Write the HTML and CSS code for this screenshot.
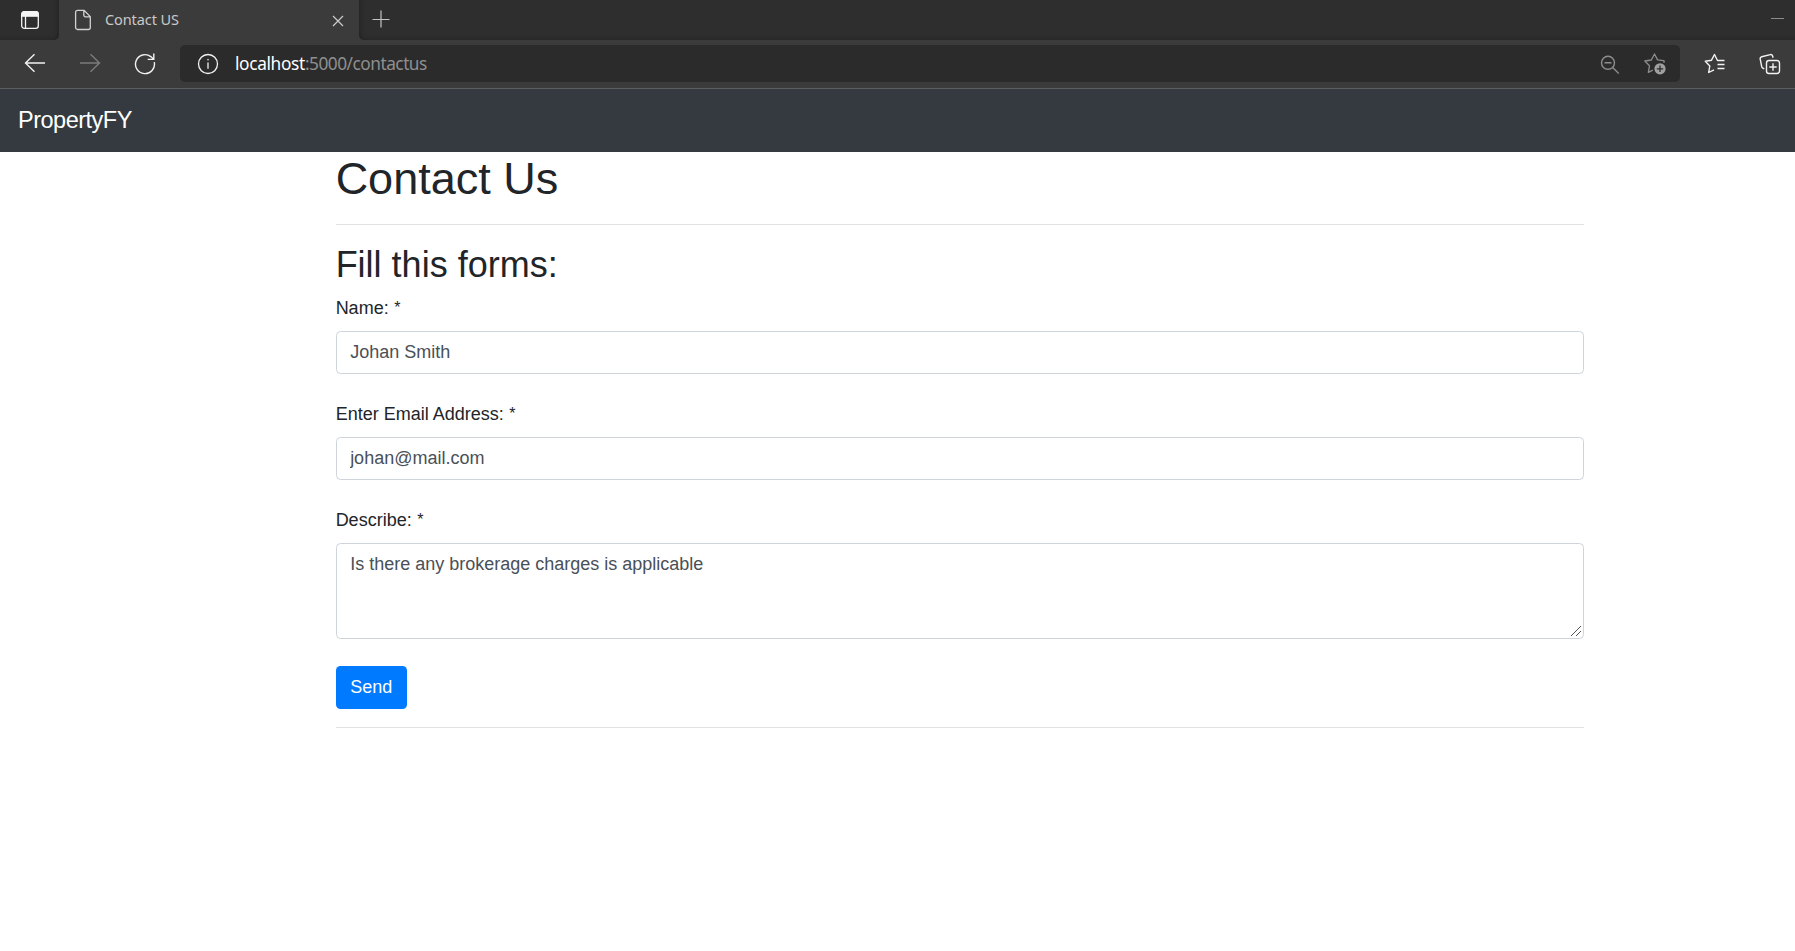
FILE: index.html
```html
<!DOCTYPE html>
<html lang="en">
<head>
<meta charset="utf-8">
<title>Contact US</title>
<link rel="stylesheet" href="styles.css">
</head>
<body>
<header class="browser">
  <div class="tabstrip">
    <div class="tabmenu">
      <svg width="20" height="20" viewBox="0 0 20 20" fill="none" stroke="#f4f4f4" stroke-width="1.3"><rect x="1.7" y="1.7" width="16.6" height="16.6" rx="2.6"/><path d="M5.5 6v12"/><path d="M2 6.2V4a2.4 2.4 0 0 1 2.4-2.4h11.2A2.4 2.4 0 0 1 18 4v2.200z" fill="#f4f4f4"/></svg>
    </div>
    <div class="tab">
      <svg class="doc" width="18" height="22" viewBox="0 0 18 22" fill="none" stroke="#d2d2d2" stroke-width="1.3" stroke-linejoin="round"><path d="M3.600 1.300H10L16.300 7.600V18.500a2 2 0 0 1-2 2H3.600a2 2 0 0 1-2-2V3.300a2 2 0 0 1 2-2zM9.800 1.500V6.200a1.600 1.600 0 0 0 1.600 1.600H16"/></svg>
      <span class="tab-title">Contact US</span>
      <svg class="close" width="12" height="12" viewBox="0 0 12 12" stroke="#cdcdcd" stroke-width="1.200"><path d="M1 1l10 10M11 1L1 11"/></svg>
    </div>
    <div class="strip-rest">
      <svg class="plus" width="18" height="18" viewBox="0 0 18 18" stroke="#c4c4c4" stroke-width="1.200"><path d="M.5 9.500h17M9 .5v17"/></svg>
      <svg class="minimize" width="14" height="2" viewBox="0 0 14 2"><path d="M0 .5h13" stroke="#8c8c8c"/></svg>
    </div>
  </div>
  <div class="toolbar">
    <svg class="back" width="22" height="20" viewBox="0 0 22 20" fill="none" stroke="#f2f2f2" stroke-width="1.4"><path d="M21 10H1.500M10.500 1.200L1.500 10l9 8.800"/></svg>
    <svg class="forward" width="22" height="20" viewBox="0 0 22 20" fill="none" stroke="#7b7b7b" stroke-width="1.4"><path d="M1 10h19.500M11.500 1.200l9 8.800-9 8.800"/></svg>
    <svg class="reload" width="22" height="22" viewBox="0 0 22 22" fill="none" stroke="#f2f2f2" stroke-width="1.400"><path d="M20.300 9.200A9.500 9.500 0 1 1 16.800 3.600L19.500 6M13.700 6.400h6.100V.6"/></svg>
    <div class="address">
      <svg class="info" width="22" height="22" viewBox="0 0 22 22" fill="none" stroke="#f2f2f2" stroke-width="1.300"><circle cx="11" cy="11" r="9.500"/><path d="M11 9.500v6.300"/><circle cx="11" cy="6.700" r=".5" fill="#f2f2f2" stroke-width=".6"/></svg>
      <span class="url"><span class="host">localhost</span>:5000/contactus</span>
      <svg class="zoom" width="20" height="20" viewBox="0 0 20 20" fill="none" stroke="#8d8d8d" stroke-width="1.400"><circle cx="8" cy="7.800" r="6.500"/><path d="M4.500 7.800h7M12.700 12.500l6 6"/></svg>
      <svg class="addfav" width="24" height="24" viewBox="0 0 24 24" fill="none" stroke="#8d8d8d" stroke-width="1.300" stroke-linejoin="round"><path d="M20.500 10.500l.7-.8q.3-.8-.7-1l-5.900-.8L11.500 2 8.300 8 1.800 9l4.700 4.800-1.200 6.500 4.500-2.200"/><circle cx="17" cy="16.800" r="5.600" fill="#a0a0a0" stroke="none"/><path d="M17 13.600V20M13.800 16.800h6.400" stroke="#2b2b2b"/></svg>
    </div>
    <svg class="favs" width="22" height="22" viewBox="0 0 22 22" fill="none" stroke="#f2f2f2" stroke-width="1.400" stroke-linejoin="round"><path d="M20.500 7.500h-7L10.500 1.500 7.500 7.200 1.300 8.200l4.500 4.700L4.700 19.500l5.300-2.700M13.500 11.500h7M13.500 15.500h7"/></svg>
    <svg class="collections" width="22" height="22" viewBox="0 0 22 22" fill="none" stroke="#f2f2f2" stroke-width="1.400" stroke-linejoin="round"><rect x="7.500" y="7.500" width="13" height="13" rx="2.500"/><path d="M14 10.300v7.400M10.300 14h7.400M5.300 16L3.900 15.200Q3 14.600 2.700 13.500L1.200 6.200q-.4-2 1.500-2.500L11.300 1.600q1.800-.3 2.300 1.400l.5 1.700"/></svg>
  </div>
</header>
<nav class="navbar"><a class="brand">PropertyFY</a></nav>
<main class="container">
  <h1>Contact Us</h1>
  <hr>
  <h2>Fill this forms:</h2>
  <form>
    <div class="group">
      <label for="name">Name: <span class="req">*</span></label>
      <input id="name" class="control" type="text" value="Johan Smith">
    </div>
    <div class="group">
      <label for="email">Enter Email Address: <span class="req">*</span></label>
      <input id="email" class="control" type="text" value="johan@mail.com">
    </div>
    <div class="group">
      <label for="describe">Describe: <span class="req">*</span></label>
      <div class="area-wrap">
        <textarea id="describe" class="control area" rows="3" spellcheck="false">Is there any brokerage charges is applicable</textarea>
        <svg class="grip" width="12" height="12" viewBox="0 0 12 12" stroke="#555" stroke-width="1"><path d="M1 11L11 1M6 11l5-5"/></svg>
      </div>
    </div>
    <button class="send" type="button">Send</button>
  </form>
  <hr>
</main>
</body>
</html>
```
FILE: styles.css
```css
* { box-sizing: border-box; }
body {
  margin: 0;
  height: 951px;
  overflow: hidden;
  background: #fff;
  color: #212529;
  font: 18px/1.5 "Liberation Sans", Arial, sans-serif;
}
svg { display: block; flex: none; }

.browser {
  height: 89px;
  background: #3b3b3b;
  border-bottom: 1px solid #5c5d5e;
  font-family: "Noto Sans", "Open Sans", sans-serif;
}
.tabstrip { display: flex; height: 40px; }
.tabmenu {
  width: 59px;
  padding: 10px 0 0 20px;
  background: #2e2e2e;
  border-bottom-right-radius: 5px;
  box-shadow: inset -3px -2px 4px -2px #222;
}
.tab { display: flex; width: 300px; padding-left: 15px; }
.doc { margin-top: 9px; }
.tab-title {
  margin-left: 13px;
  font-size: 14.5px;
  line-height: 38px;
  letter-spacing: -.1px;
  color: #c9c9c9;
}
.close { margin: 15px 15px 0 auto; }
.strip-rest {
  display: flex;
  flex: 1;
  background: #2e2e2e;
  border-bottom-left-radius: 5px;
  box-shadow: inset 3px -2px 4px -2px #222;
}
.plus { margin: 10px 0 0 13px; }
.minimize { margin: 18px 10px 0 auto; }

.toolbar { display: flex; height: 48px; padding-top: 5px; }
.back { margin: 8px 0 0 24px; }
.forward { margin: 8px 0 0 33px; }
.reload { margin: 8px 0 0 33px; }
.address {
  display: flex;
  width: 1500px;
  height: 37px;
  margin-left: 24px;
  background: #2b2b2b;
  border-radius: 5px;
}
.info { margin: 8px 0 0 16.5px; }
.url {
  margin-left: 16.5px;
  font-size: 17.3px;
  line-height: 38px;
  letter-spacing: -.5px;
  color: #8f8f8f;
  white-space: nowrap;
}
.host { color: #fff; letter-spacing: -.35px; }
.zoom { margin: 9.5px 0 0 auto; }
.addfav { margin: 7px 13px 0 23.5px; }
.favs { margin: 8px 0 0 24px; }
.collections { margin: 8px 0 0 33px; }

.navbar { height: 63px; padding: 9px 18px; background: #343a40; }
.brand {
  display: block;
  padding-top: 6px;
  font-size: 23.5px;
  line-height: 33.75px;
  letter-spacing: -.5px;
  color: #fff;
}

.container { width: 1248.75px; margin-left: 335.625px; }
h1, h2 { margin: 0 0 9px; font-weight: 400; line-height: 1.2; }
h1 { font-size: 45px; }
h2 { font-size: 36px; }
hr { margin: 18px 0; border: 0; border-top: 1px solid #e1e1e1; }
.group { margin-bottom: 27px; }
label { display: block; margin-bottom: 9px; }
.req { position: relative; top: -1px; left: .5px; font-size: 16px; line-height: 1; }
.control {
  display: block;
  width: 100%;
  height: 42.75px;
  margin: 0;
  padding: 6.75px 13.5px;
  border: 1px solid #ced4da;
  border-radius: 4.5px;
  background: #fff;
  color: #495057;
  font: inherit;
  outline: 0;
}
.area-wrap { position: relative; }
.area { height: 96px; padding-top: 7.5px; resize: none; overflow: auto; }
.grip { position: absolute; right: 2px; bottom: 2px; }
.send {
  display: block;
  height: 43px;
  padding: 0 14.5px;
  border: 0;
  border-radius: 4.5px;
  background: #007bff;
  color: #fff;
  font: inherit;
}
```
